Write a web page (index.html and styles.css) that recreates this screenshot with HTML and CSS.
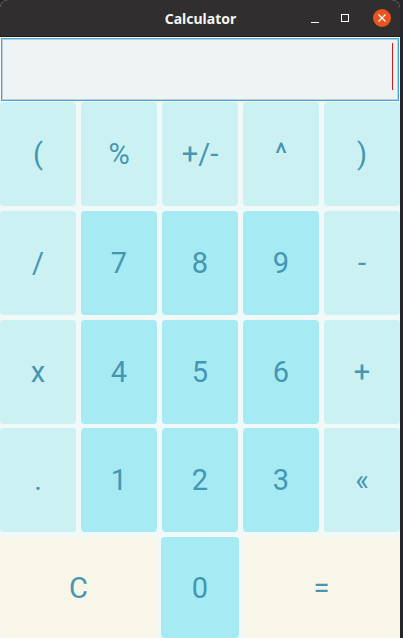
FILE: index.html
```html
<!DOCTYPE html>
<html>
<head>
<meta charset="utf-8">
<link rel="stylesheet" href="styles.css">
</head>
<body>
<div class="window">
  <div class="titlebar">
    <span class="title">Calculator</span>
    <div class="controls">
      <span class="ctl min"><svg width="10" height="10" viewBox="0 0 10 10"><line x1="1" y1="8.5" x2="9" y2="8.5" stroke="#fff" stroke-width="1"/></svg></span>
      <span class="ctl max"><svg width="10" height="10" viewBox="0 0 10 10"><rect x="1.5" y="1.5" width="7" height="7" fill="none" stroke="#fff" stroke-width="1"/></svg></span>
      <span class="ctl close"><svg width="18" height="18" viewBox="0 0 18 18"><circle cx="9" cy="9" r="9" fill="#e95420"/><path d="M5.5 5.5 L12.5 12.5 M12.5 5.5 L5.5 12.5" stroke="#fff" stroke-width="1.3"/></svg></span>
    </div>
  </div>
  <div class="content">
    <div class="display"><span class="caret"></span></div>
    <div class="keys">
      <div class="key op">(</div>
      <div class="key op">%</div>
      <div class="key op">+/-</div>
      <div class="key op">^</div>
      <div class="key op">)</div>
      <div class="key op">/</div>
      <div class="key num">7</div>
      <div class="key num">8</div>
      <div class="key num">9</div>
      <div class="key op">-</div>
      <div class="key op">x</div>
      <div class="key num">4</div>
      <div class="key num">5</div>
      <div class="key num">6</div>
      <div class="key op">+</div>
      <div class="key op">.</div>
      <div class="key num">1</div>
      <div class="key num">2</div>
      <div class="key num">3</div>
      <div class="key op">«</div>
      <div class="key act wide">C</div>
      <div class="key num zero">0</div>
      <div class="key act wide">=</div>
    </div>
  </div>
</div>
</body>
</html>
```
FILE: styles.css
```css
html, body {
  margin: 0;
  padding: 0;
  background: #25252b;
  width: 403px;
  height: 638px;
  overflow: hidden;
}
.window {
  width: 400px;
  height: 638px;
  display: flex;
  flex-direction: column;
  background: #f1f8f8;
  border-radius: 8px 8px 0 0;
  overflow: hidden;
}
.titlebar {
  height: 36px;
  background: #302e2e;
  border-bottom: 1px solid #1c1b1b;
  position: relative;
  display: flex;
  align-items: center;
  justify-content: center;
  flex-shrink: 0;
}
.title {
  color: #f4f4f4;
  font-family: "Noto Sans", "DejaVu Sans", sans-serif;
  font-weight: bold;
  font-size: 14px;
  margin-left: 1px;
  margin-top: 1px;
}
.controls {
  position: absolute;
  right: 9px;
  top: 9px;
  display: flex;
  align-items: center;
  gap: 20px;
}
.ctl {
  display: flex;
  align-items: center;
  justify-content: center;
}
.ctl.min { margin-top: 1px; }
.ctl.max { margin-right: 3px; }
.content {
  flex: 1;
  display: flex;
  flex-direction: column;
  padding-top: 1px;
}
.display {
  height: 61px;
  flex-shrink: 0;
  margin: 0 1px;
  background: #eef3f3;
  border: 1px solid #4ba6d8;
  box-shadow: inset 0 0 0 1px #b9cfd9;
  position: relative;
}
.caret {
  position: absolute;
  right: 5px;
  top: 4px;
  width: 1px;
  height: 47px;
  background: #d21b1b;
}
.keys {
  flex: 1;
  margin-top: 1px;
  display: grid;
  grid-template-columns: repeat(5, 76px);
  grid-template-rows: repeat(4, 104px) 101px;
  column-gap: 5px;
  row-gap: 4.75px;
}
.key {
  border-radius: 4px;
  display: flex;
  align-items: center;
  justify-content: center;
  font-family: Roboto, "Noto Sans", sans-serif;
  font-size: 29px;
  color: #4596b0;
}
.op { background: #ccf1f3; }
.num { background: #a6ebf3; }
.act { background: #f8f6e8; }
.wide { grid-column: span 2; }
.zero { margin: 0 -1px; }
```
